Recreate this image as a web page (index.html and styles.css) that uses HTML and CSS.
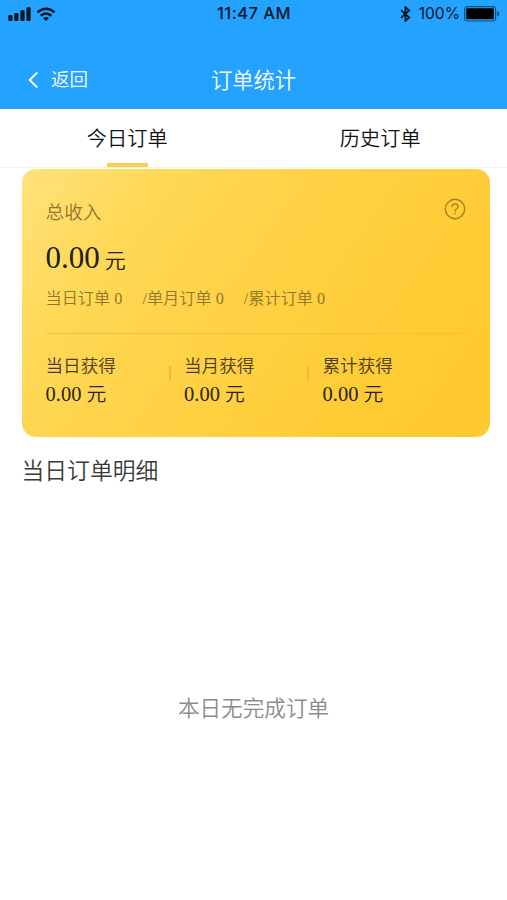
FILE: index.html
```html
<!DOCTYPE html>
<html lang="zh-CN">
<head>
<meta charset="utf-8">
<title>订单统计</title>
<link rel="stylesheet" href="styles.css">
</head>
<body>
<header class="header">
  <div class="status">
    <div class="status-left">
      <svg width="24" height="14" viewBox="0 0 24 14"><rect x="0.3" y="8" width="4.2" height="6" rx="1.2"/><rect x="6.3" y="6" width="4.2" height="8" rx="1.2"/><rect x="12.4" y="3.3" width="4.2" height="10.7" rx="1.2"/><rect x="18.4" y="0.2" width="4.2" height="13.8" rx="1.2"/></svg>
      <svg class="wifi" width="20" height="14" viewBox="0 0 20 14"><path d="M1.5 5.4Q10-1.9 18.5 5.4M4.7 8.8q5.3-4.6 10.6 0" fill="none" stroke="#001522" stroke-width="2.5"/><path d="M7.1 11.3q2.9-2.5 5.8 0L10 14z"/></svg>
    </div>
    <div class="clock">11:47 AM</div>
    <div class="status-right">
      <svg width="11" height="16" viewBox="0 0 11 16"><path d="M1 4.2l8.2 7.3L5.4 15V1l3.8 3.5L1 11.8" fill="none" stroke="#001522" stroke-width="1.7"/></svg>
      <span class="percent">100%</span>
      <svg class="battery" width="36" height="16" viewBox="0 0 36 16"><rect x=".6" y=".6" width="31" height="14.4" rx="3.2" fill="none" stroke="#0d517f" stroke-width="1.2"/><rect x="2.2" y="2.3" width="27.6" height="11" rx="1.3" fill="#000"/><path d="M33.2 5.5q2.2.4 2.2 2.4t-2.2 2.4z" fill="#0d517f"/></svg>
    </div>
  </div>
  <nav class="nav">
    <div class="back"><svg width="11" height="18" viewBox="0 0 11 18"><path d="M9.3 1.5L1.7 9l7.6 7.5" fill="none" stroke="#fff" stroke-width="1.9"/></svg><span>返回</span></div>
    <h1 class="title">订单统计</h1>
  </nav>
</header>
<div class="tabs">
  <div class="tab active">今日订单</div>
  <div class="tab">历史订单</div>
</div>
<section class="card">
  <div class="card-head">
    <span>总收入</span>
    <svg width="22" height="22" viewBox="0 0 22 22" fill="none" stroke="#a5821f" stroke-width="1.4"><circle cx="11" cy="11" r="9.7"/><path d="M8 9q0-3.1 3-3.1T14 8.7q0 1.3-1.6 2.3-1.4.9-1.4 2.5M11 14.7v1.5"/></svg>
  </div>
  <div class="total"><span class="total-num">0.00</span><span class="total-unit">元</span></div>
  <div class="counts"><span>当日订单 0</span><span>/单月订单 0</span><span>/累计订单 0</span></div>
  <div class="earnings">
    <div class="earning"><div class="label">当日获得</div><div class="amount"><span>0.00</span><span class="unit">元</span></div></div>
    <div class="earning"><div class="label">当月获得</div><div class="amount"><span>0.00</span><span class="unit">元</span></div></div>
    <div class="earning"><div class="label">累计获得</div><div class="amount"><span>0.00</span><span class="unit">元</span></div></div>
  </div>
</section>
<h2 class="detail">当日订单明细</h2>
<p class="empty">本日无完成订单</p>
</body>
</html>
```
FILE: styles.css
```css
* { box-sizing: border-box; }
body {
  margin: 0;
  height: 900px;
  overflow: hidden;
  background: #fff;
  font-family: "Liberation Serif", "Noto Sans CJK SC", serif;
  font-weight: 350;
}
h1, h2, p { margin: 0; font-weight: 350; }
svg { display: block; flex: none; }

.header { height: 109px; background: #24a2ff; }
.status {
  display: grid;
  grid-template-columns: 1fr auto 1fr;
  align-items: center;
  height: 27px;
  padding: 0 7px 0 8px;
  color: #001522;
  font: 500 16px/27px Inter, sans-serif;
}
.status svg { fill: #001522; }
.status-left { display: flex; align-items: center; }
.wifi { margin-left: 4px; }
.clock { font-size: 16.5px; letter-spacing: .5px; }
.status-right { display: flex; align-items: center; justify-content: flex-end; }
.percent { margin: 0 4px 0 8px; font-size: 15.6px; font-weight: 400; }
.nav {
  display: grid;
  grid-template-columns: 1fr auto 1fr;
  align-items: center;
  height: 66px;
  margin-top: 20px;
  color: #fff;
}
.back { display: flex; align-items: center; gap: 12px; padding-left: 28px; font-size: 18.5px; line-height: 28px; }
.title { padding-top: 1px; font-size: 21.3px; line-height: 30px; }

.tabs {
  display: grid;
  grid-template-columns: 1fr 1fr;
  height: 59px;
  border-bottom: 1px solid #f3f3f3;
  color: #111;
  font-size: 20.2px;
  line-height: 61px;
  text-align: center;
}
.tab.active { padding-left: 1px; }
.tab.active::after {
  content: "";
  display: block;
  width: 41px;
  height: 4px;
  margin: -7px auto 0;
  background: #f7cf51;
}

.card {
  width: 468.5px;
  height: 268px;
  margin: 1px 0 0 21.5px;
  padding: 28px 24px 0;
  border-radius: 14px;
  background: linear-gradient(125deg, #ffe27b 0%, #ffd856 22%, #ffd144 48%, #ffcb32 80%, #ffc92e 100%);
}
.card-head { display: flex; justify-content: space-between; height: 32px; color: #8e7634; font-size: 18.7px; line-height: 32px; }
.card-head svg { margin-top: 1px; }
.total { display: flex; align-items: baseline; gap: 5px; height: 56px; color: #222013; line-height: 58px; }
.total-num { font-size: 31px; }
.total-unit { font-size: 21px; }
.counts { display: flex; gap: 20px; height: 49px; border-bottom: 1px solid #efc23e; color: #8f782e; font-size: 16.2px; line-height: 28px; }
.earnings { display: grid; grid-template-columns: 138.5px 138.5px 1fr; padding-top: 18px; color: #4a401d; }
.earning { position: relative; }
.earning + .earning::before {
  content: "";
  position: absolute;
  top: 14px;
  left: -15.5px;
  width: 2px;
  height: 15px;
  background: #e9bc3c;
}
.label { font-size: 17.6px; line-height: 28px; }
.amount { display: flex; align-items: baseline; gap: 5px; color: #29240f; font-size: 20.5px; line-height: 28px; }
.unit { font-size: 19.8px; }
.detail { margin: 16.5px 0 0 21.5px; color: #3b3b3b; font-size: 22.8px; line-height: 36px; }
.empty { margin-top: 202.5px; color: #8c8c8c; font-size: 21.6px; line-height: 34px; text-align: center; }
```
